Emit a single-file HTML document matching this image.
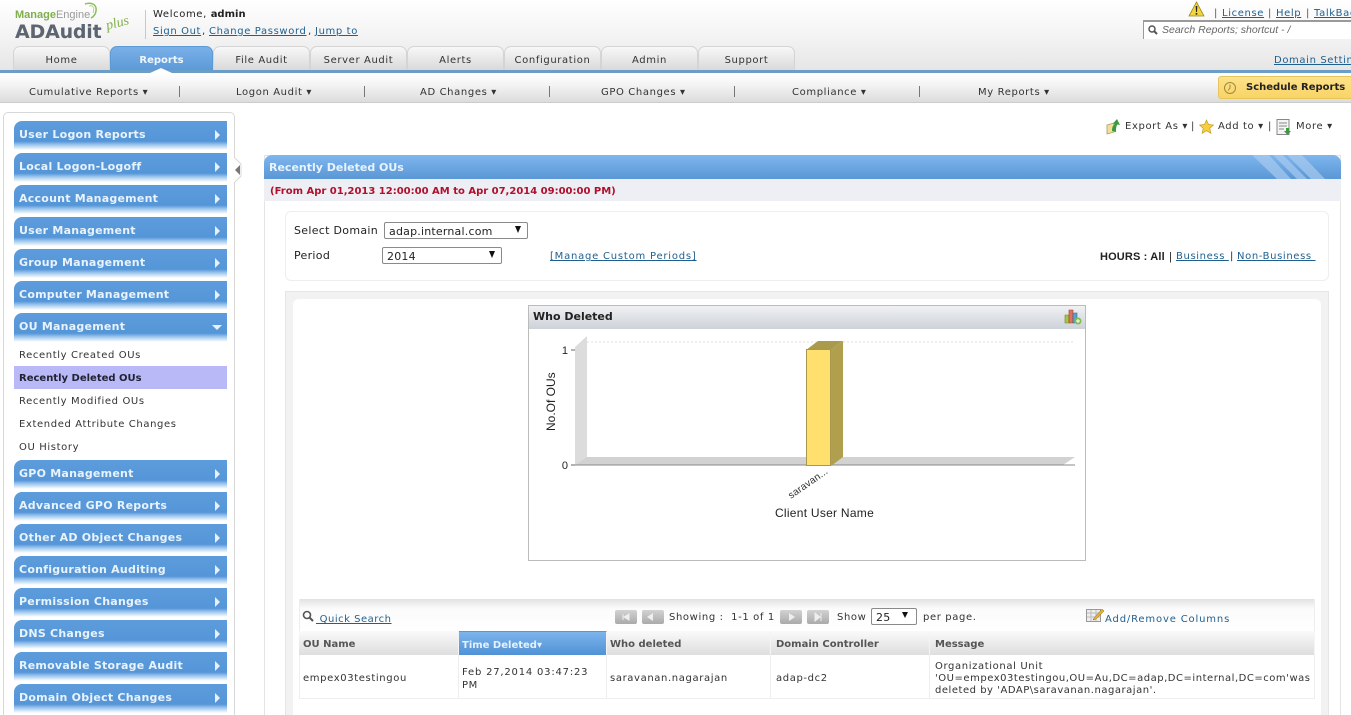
<!DOCTYPE html>
<html><head><meta charset="utf-8"><style>
html,body{margin:0;padding:0;background:#fff}
#p{position:relative;width:1351px;height:715px;overflow:hidden;background:#fff;font-family:"DejaVu Sans","Liberation Sans",sans-serif;font-size:10px;color:#333;letter-spacing:.62px}
#p div,#p a,#p span.t,#p span.sn,#p span.sub,#p svg{position:absolute}
#p svg{letter-spacing:0}
#p b{letter-spacing:0}
.t{white-space:nowrap;line-height:14px;margin-top:1px}
a{color:#1f5f8f;text-decoration:underline;white-space:nowrap;line-height:14px;margin-top:1px}
.tab{top:46px;height:24px;width:96px;border:1px solid #d4d4d4;border-bottom:0;border-radius:7px 7px 0 0;background:linear-gradient(#f8f8f8,#d9d9d9);box-sizing:border-box;text-align:center;line-height:28px;color:#333}
.sn{top:84px;line-height:14px;white-space:nowrap;color:#333;margin-top:2px}
.sep{top:86px;width:1px;height:11px;background:#777}
.si{left:14px;width:213px;height:29px;border-radius:8px 0 0 0;background:linear-gradient(#5d9cdc 0,#5596d8 70%,#a9cdf0 84%,#fff 100%);color:#e8f3fc;font-weight:bold;font-size:11px;line-height:28px;text-indent:5px;white-space:nowrap;letter-spacing:.24px}
.ar{left:215px;width:0;height:0;border-left:5px solid #e6f1fb;border-top:5px solid transparent;border-bottom:5px solid transparent}
.sub{left:19px;line-height:14px;white-space:nowrap;color:#333;margin-top:2px}
.th{top:631px;height:24px;background:linear-gradient(#fafafa,#dedede);font-weight:bold;color:#555;line-height:27px;text-indent:4px;box-sizing:border-box;white-space:nowrap;border-right:1px solid #f4f4f4;letter-spacing:0}
.td{top:655px;height:44px;border-right:1px solid #eee;box-sizing:border-box}
.nb{top:610px;height:14px;width:22px;background:linear-gradient(#d2d2d2,#aaa);border-radius:2px}
.sel{height:17px;background:#fff;border:1px solid #8a8a8a;border-radius:2px;box-sizing:border-box;font-size:11px;line-height:18px;color:#222;text-indent:4px;letter-spacing:.2px}
.m1{margin-top:2px}
</style></head><body><div id="p">

<!-- header -->
<div style="left:0;top:0;width:1351px;height:70px;background:linear-gradient(#fff 0,#f4f4f4 50%,#e6e6e6 100%)"></div>
<svg style="left:80px;top:2px" width="22" height="20" viewBox="0 0 22 20"><path d="M5 2C11 0 17 2 16 9C15.500 13 13 15 11 16" fill="none" stroke="#8cbf5a" stroke-width="1.500"/><path d="M9 4C13 3 15 6 13 11" fill="none" stroke="#b5d68f" stroke-width="1"/></svg>
<span class="t" style="left:15px;top:7px;font-family:'Liberation Sans',sans-serif;font-size:11px;letter-spacing:0;color:#7fae4c"><b>Manage</b><span style="color:#9a9a9a">Engine</span></span>
<span class="t" style="left:15px;top:21px;font-family:'DejaVu Sans',sans-serif;font-size:19px;font-weight:bold;color:#5c6570;line-height:20px;letter-spacing:-.2px">ADAudit</span>
<span class="t" style="left:106px;top:16px;font-family:'Liberation Serif',serif;font-style:italic;font-size:14px;letter-spacing:0;color:#7fb04a;transform:rotate(-14deg)">plus</span>
<div style="left:145px;top:10px;width:1px;height:29px;background:#c8c8c8"></div>
<span class="t" style="left:153px;top:7px;color:#222">Welcome, <b>admin</b></span>
<a class="m1" style="left:153px;top:23px">Sign Out</a><span class="t m1" style="left:202px;top:23px">,</span>
<a class="m1" style="left:209px;top:23px">Change Password</a><span class="t m1" style="left:308px;top:23px">,</span>
<a class="m1" style="left:315px;top:23px">Jump to</a>

<svg style="left:1188px;top:1px" width="17" height="16" viewBox="0 0 17 16"><path d="M8.500 1L16 15H1Z" fill="#f2d43c" stroke="#9a8a20" stroke-width=".8"/><path d="M7.700 5h1.600l-.3 6h-1zM7.700 12h1.600v1.600H7.700z" fill="#222"/></svg>
<span class="t m1" style="left:1214px;top:5px;color:#555">|</span><a class="m1" style="left:1222px;top:5px">License</a>
<span class="t m1" style="left:1268px;top:5px;color:#555">|</span><a class="m1" style="left:1276px;top:5px">Help</a>
<span class="t m1" style="left:1306px;top:5px;color:#555">|</span><a class="m1" style="left:1314px;top:5px">TalkBack</a>
<div style="left:1143px;top:20px;width:208px;height:19px;background:#fff;border-top:2px solid #9a9a9a;border-left:1px solid #9a9a9a;box-sizing:border-box"></div>
<svg style="left:1148px;top:25px" width="10" height="10" viewBox="0 0 10 10"><circle cx="4" cy="4" r="3" fill="none" stroke="#555" stroke-width="1.500"/><path d="M6 6l3 3" stroke="#555" stroke-width="2"/></svg>
<span class="t" style="left:1162px;top:22px;font-family:'Liberation Sans',sans-serif;font-style:italic;font-size:10.500px;color:#666;letter-spacing:0">Search Reports; shortcut - /</span>
<a style="left:1274px;top:53px">Domain Settings</a>

<div class="tab" style="left:13px;width:97px">Home</div>
<div class="tab" style="left:213px;width:97px">File Audit</div>
<div class="tab" style="left:310px;width:97px">Server Audit</div>
<div class="tab" style="left:407px;width:97px">Alerts</div>
<div class="tab" style="left:504px;width:97px">Configuration</div>
<div class="tab" style="left:601px;width:97px">Admin</div>
<div class="tab" style="left:698px;width:97px">Support</div>
<div class="tab" style="left:110px;width:103px;height:24px;background:linear-gradient(#7ab0e8,#5c9ad8);border:1px solid #5c9ad8;border-bottom:0;color:#eef6fd;font-weight:bold;letter-spacing:0">Reports</div>
<div style="left:0;top:70px;width:1351px;height:3px;background:#6c9dc6"></div>
<div style="left:150px;top:68px;width:0;height:0;border-left:11px solid transparent;border-right:11px solid transparent;border-bottom:5px solid #fff"></div>

<!-- subnav -->
<div style="left:0;top:73px;width:1351px;height:30px;background:linear-gradient(#fff 0,#f4f4f4 40%,#dcdcdc 100%);border-bottom:1px solid #ccc;box-sizing:border-box"></div>
<span class="sn" style="left:29px">Cumulative Reports ▾</span><div class="sep" style="left:179px"></div>
<span class="sn" style="left:236px">Logon Audit ▾</span><div class="sep" style="left:364px"></div>
<span class="sn" style="left:420px">AD Changes ▾</span><div class="sep" style="left:549px"></div>
<span class="sn" style="left:601px">GPO Changes ▾</span><div class="sep" style="left:734px"></div>
<span class="sn" style="left:792px">Compliance ▾</span><div class="sep" style="left:919px"></div>
<span class="sn" style="left:978px">My Reports ▾</span>
<div style="left:1218px;top:76px;width:140px;height:23px;background:linear-gradient(#fde28a,#f9d466);border:1px solid #e6c65c;border-radius:3px;box-sizing:border-box"></div>
<svg style="left:1223px;top:81px" width="14" height="14" viewBox="0 0 14 14"><circle cx="7" cy="7" r="5.500" fill="none" stroke="#a08a3a"/><path d="M7 3.500V7L5 9.500" fill="none" stroke="#a08a3a"/></svg>
<span class="t" style="left:1246px;top:80px;font-weight:bold;color:#222;font-size:10px;letter-spacing:0">Schedule Reports</span>

<!-- sidebar -->
<div style="left:3px;top:112px;width:232px;height:620px;border:1px solid #d8d8d8;border-radius:5px;box-sizing:border-box"></div>
<div class="si" style="top:121px">User Logon Reports</div><div class="ar" style="top:130px"></div>
<div class="si" style="top:153px">Local Logon-Logoff</div><div class="ar" style="top:162px"></div>
<div class="si" style="top:185px">Account Management</div><div class="ar" style="top:194px"></div>
<div class="si" style="top:217px">User Management</div><div class="ar" style="top:226px"></div>
<div class="si" style="top:249px">Group Management</div><div class="ar" style="top:258px"></div>
<div class="si" style="top:281px">Computer Management</div><div class="ar" style="top:290px"></div>
<div class="si" style="top:313px">OU Management</div>
<div style="left:212px;top:325px;width:0;height:0;border-top:5px solid #e6f1fb;border-left:5px solid transparent;border-right:5px solid transparent"></div>
<span class="sub" style="top:347px">Recently Created OUs</span>
<div style="left:14px;top:366px;width:213px;height:23px;background:#b9b9f8"></div>
<span class="sub" style="top:370px;font-weight:bold;color:#223;letter-spacing:0">Recently Deleted OUs</span>
<span class="sub" style="top:393px">Recently Modified OUs</span>
<span class="sub" style="top:416px">Extended Attribute Changes</span>
<span class="sub" style="top:439px">OU History</span>
<div class="si" style="top:460px">GPO Management</div><div class="ar" style="top:469px"></div>
<div class="si" style="top:492px">Advanced GPO Reports</div><div class="ar" style="top:501px"></div>
<div class="si" style="top:524px">Other AD Object Changes</div><div class="ar" style="top:533px"></div>
<div class="si" style="top:556px">Configuration Auditing</div><div class="ar" style="top:565px"></div>
<div class="si" style="top:588px">Permission Changes</div><div class="ar" style="top:597px"></div>
<div class="si" style="top:620px">DNS Changes</div><div class="ar" style="top:629px"></div>
<div class="si" style="top:652px">Removable Storage Audit</div><div class="ar" style="top:661px"></div>
<div class="si" style="top:684px">Domain Object Changes</div><div class="ar" style="top:693px"></div>
<svg style="left:233px;top:157px" width="9" height="26" viewBox="0 0 9 26"><path d="M1 0L8 7V19L1 26" fill="#fff" stroke="#d8d8d8"/><path d="M7 8V18L2 13Z" fill="#777"/></svg>

<!-- top right tools -->
<svg style="left:1106px;top:118px" width="16" height="17" viewBox="0 0 16 17"><path d="M1 7L8 5V14L1 16Z" fill="#f0e0a0" stroke="#b09a50" stroke-width=".8"/><path d="M6 13C6 9 7 7 9 6L7 5.500L11 1L14 7L11.500 6.500C10 8 10 11 10 14Z" fill="#3c9a3c"/></svg>
<span class="t m1" style="left:1125px;top:118px">Export As ▾</span><span class="t m1" style="left:1191px;top:118px">|</span>
<svg style="left:1199px;top:119px" width="15" height="15" viewBox="0 0 15 15"><path d="M7.500 1l2 4.500 5 .5-3.700 3.300 1.100 5-4.400-2.600-4.400 2.600 1.100-5L.5 6l5-.5z" fill="#f7cf3c" stroke="#c59a20" stroke-width=".7"/></svg>
<span class="t m1" style="left:1218px;top:118px">Add to ▾</span><span class="t m1" style="left:1268px;top:118px">|</span>
<svg style="left:1276px;top:119px" width="16" height="16" viewBox="0 0 16 16"><path d="M1 .5h12v15H1z" fill="#f4f4f4" stroke="#888"/><path d="M3 4h8M3 7h8M3 10h5" stroke="#888"/><path d="M10 9h3v3h2l-3.500 4L8 12h2z" fill="#3c9a3c"/></svg>
<span class="t m1" style="left:1296px;top:118px">More ▾</span>

<!-- main panel -->
<div style="left:264px;top:155px;width:1077px;height:570px;border:1px solid #e4e4e4;box-sizing:border-box"></div>
<div style="left:264px;top:155px;width:1077px;height:24px;border-radius:8px 8px 0 0;background:linear-gradient(#7fb6ee,#5a97d6);overflow:hidden">
<svg style="left:985px;top:0" width="92" height="24" viewBox="0 0 92 24"><path d="M3 0H20L42 24H28ZM24 0H34L58 24H48ZM38 0H53L76 24H62Z" fill="#a8cbef" opacity=".7"/></svg>
</div>
<span class="t" style="left:269px;top:160px;font-weight:bold;font-size:11px;color:#e8f3fc;letter-spacing:0">Recently Deleted OUs</span>
<div style="left:264px;top:179px;width:1077px;height:22px;background:#eeeef5"></div>
<span class="t" style="left:270px;top:184px;font-weight:bold;font-size:10px;color:#b0102c;letter-spacing:0">(From Apr 01,2013 12:00:00 AM to Apr 07,2014 09:00:00 PM)</span>

<div style="left:285px;top:211px;width:1044px;height:70px;border:1px solid #eee;border-radius:6px;box-sizing:border-box"></div>
<span class="t" style="left:294px;top:223px;font-size:11px;color:#222;letter-spacing:.3px">Select Domain</span>
<div class="sel" style="left:384px;top:222px;width:144px">adap.internal.com</div>
<div style="left:515px;top:226px;border-top:7px solid #111;border-left:3.500px solid transparent;border-right:3.500px solid transparent;width:0;height:0"></div>
<span class="t" style="left:294px;top:248px;font-size:11px;color:#222;letter-spacing:.3px">Period</span>
<div class="sel" style="left:382px;top:247px;width:120px">2014</div>
<div style="left:489px;top:251px;border-top:7px solid #111;border-left:3.500px solid transparent;border-right:3.500px solid transparent;width:0;height:0"></div>
<a style="left:550px;top:249px;letter-spacing:.78px">[Manage Custom Periods]</a>
<span class="t" style="left:1100px;top:249px;font-family:'Liberation Sans',sans-serif;font-size:11px;font-weight:bold;color:#222;letter-spacing:.15px">HOURS : All <span style="font-weight:normal;margin-left:1px">|</span></span>
<a style="left:1176px;top:249px">Business&nbsp;</a><span class="t" style="left:1230px;top:249px;color:#222">|</span>
<a style="left:1237px;top:249px">Non-Business&nbsp;</a>

<div style="left:285px;top:291px;width:1044px;height:430px;background:#f2f2f2;border:1px solid #e6e6e6;box-sizing:border-box"></div>
<div style="left:293px;top:299px;width:1028px;height:420px;background:#fff;border-radius:6px"></div>

<!-- chart -->
<div style="left:528px;top:305px;width:558px;height:256px;border:1px solid #bbb;box-sizing:border-box;background:#fff"></div>
<div style="left:529px;top:306px;width:556px;height:23px;background:linear-gradient(#f0f1f3,#cdd2d9)"></div>
<span class="t" style="left:533px;top:309px;font-weight:bold;font-size:11px;color:#222;letter-spacing:0">Who Deleted</span>
<svg style="left:1064px;top:308px" width="18" height="17" viewBox="0 0 18 17"><path d="M1 7h4v8H1z" fill="#a8c24c" stroke="#6a8a20" stroke-width=".6"/><path d="M5 2h4v13H5z" fill="#e0705c" stroke="#a04030" stroke-width=".6"/><path d="M9 5h4v10H9z" fill="#5ca0d0" stroke="#2a6a9a" stroke-width=".6"/><circle cx="14" cy="13" r="3.500" fill="#7cc04c"/><path d="M14 11v4M12 13h4" stroke="#fff"/></svg>

<svg style="left:528px;top:330px" width="558" height="190" viewBox="528 330 558 190">
<path d="M575 347L587 336V458L575 465Z" fill="#dcdcdc"/>
<path d="M587 342H1075" stroke="#ddd" stroke-dasharray="2 2"/>
<path d="M575 465L587 457H1075L1063 465Z" fill="#d2d2d2"/>
<path d="M575 465H1075" stroke="#888"/>
<path d="M571 350H575M571 465H575" stroke="#666"/>
<path d="M806 350L818 341H843L831 350Z" fill="#aa9a4c"/>
<path d="M831 350L843 341V457L831 466Z" fill="#b0a04e"/>
<rect x="806.500" y="349.500" width="24" height="116" fill="#ffdf6e" stroke="#a8984c"/>
<text x="568" y="354" text-anchor="end" font-family="Liberation Sans,sans-serif" font-size="11" fill="#222">1</text>
<text x="568" y="469" text-anchor="end" font-family="Liberation Sans,sans-serif" font-size="11" fill="#222">0</text>
<text transform="translate(555,431) rotate(-90)" font-family="Liberation Sans,sans-serif" font-size="12" fill="#222">No.Of OUs</text>
<text transform="translate(791,499) rotate(-35)" font-family="Liberation Sans,sans-serif" font-size="10" fill="#333" letter-spacing=".2">saravan...</text>
<text x="775" y="517" font-family="Liberation Sans,sans-serif" font-size="12" fill="#222" letter-spacing=".27">Client User Name</text>
</svg>

<!-- table toolbar -->
<div style="left:299px;top:599px;width:1016px;height:32px;background:linear-gradient(#e2e2e2 0,#fbfbfb 30%,#fff 100%);border-right:1px solid #eee;border-left:1px solid #eee;box-sizing:border-box"></div>
<svg style="left:302px;top:610px" width="13" height="13" viewBox="0 0 13 13"><circle cx="5" cy="5" r="3.500" fill="none" stroke="#555" stroke-width="1.600"/><path d="M7.500 7.500L11 11" stroke="#555" stroke-width="2"/></svg>
<a class="m1" style="left:316px;top:611px;letter-spacing:.5px">&nbsp;Quick Search</a>
<div class="nb" style="left:615px"></div><div class="nb" style="left:642px"></div>
<svg style="left:615px;top:610px" width="50" height="14" viewBox="0 0 50 14"><path d="M8 4v6M14 4v6L9 7Z" stroke="#eee" fill="#eee"/><path d="M38 3v8l-6-4Z" fill="#eee"/></svg>
<span class="t" style="left:669px;top:610px">Showing :&nbsp;&nbsp;1-1 of 1</span>
<div class="nb" style="left:780px"></div><div class="nb" style="left:807px"></div>
<svg style="left:780px;top:610px" width="50" height="14" viewBox="0 0 50 14"><path d="M9 3v8l6-4Z" fill="#eee"/><path d="M35 3v8l5-4ZM41 3v8" fill="#eee" stroke="#eee"/></svg>
<span class="t" style="left:837px;top:610px">Show</span>
<div class="sel" style="left:871px;top:608px;width:46px">25</div>
<div style="left:902px;top:612px;border-top:6px solid #111;border-left:3.500px solid transparent;border-right:3.500px solid transparent;width:0;height:0"></div>
<span class="t" style="left:923px;top:610px">per page.</span>
<svg style="left:1086px;top:608px" width="19" height="15" viewBox="0 0 19 15"><path d="M.5 1.500h14v12H.5z" fill="#eee" stroke="#999"/><path d="M5 2v11M10 2v11M1 5h13M1 9h13" stroke="#bbb"/><path d="M8 10L16 1l2 2-8 8-3 1z" fill="#e8b030" stroke="#906a10" stroke-width=".5"/></svg>
<a class="m1" style="left:1105px;top:611px;text-decoration:none;letter-spacing:.84px">Add/Remove Columns</a>

<!-- table -->
<div class="th" style="left:299px;width:160px">OU Name</div>
<div class="th" style="left:459px;width:148px;background:linear-gradient(#7cb4ec,#5092d6);color:#e6f1fb;border-top:1px solid #5a96d6;text-indent:3px">Time Deleted▾</div>
<div class="th" style="left:607px;width:164px;text-indent:3px">Who deleted</div>
<div class="th" style="left:771px;width:159px;text-indent:5px">Domain Controller</div>
<div class="th" style="left:930px;width:385px;text-indent:5px">Message</div>
<div style="left:299px;top:655px;width:1016px;height:44px;border:1px solid #eee;border-top:0;box-sizing:border-box"></div>
<div class="td" style="left:299px;width:160px"></div><div class="td" style="left:459px;width:148px"></div><div class="td" style="left:607px;width:164px"></div><div class="td" style="left:771px;width:159px"></div>
<span class="t m1" style="left:303px;top:670px">empex03testingou</span>
<span class="t m1" style="left:462px;top:664px;letter-spacing:.8px">Feb 27,2014 03:47:23</span><span class="t m1" style="left:462px;top:677px">PM</span>
<span class="t m1" style="left:610px;top:670px">saravanan.nagarajan</span>
<span class="t m1" style="left:776px;top:670px">adap-dc2</span>
<span class="t m1" style="left:935px;top:658px">Organizational Unit</span>
<span class="t m1" style="left:935px;top:670px;letter-spacing:.52px">'OU=empex03testingou,OU=Au,DC=adap,DC=internal,DC=com'was</span>
<span class="t" style="left:935px;top:683px;letter-spacing:.52px">deleted by 'ADAP\saravanan.nagarajan'.</span>
</div></body></html>
